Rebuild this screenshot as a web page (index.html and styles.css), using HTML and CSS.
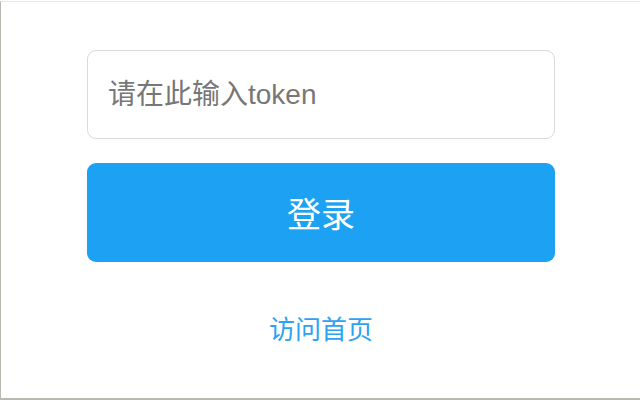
FILE: index.html
```html
<!DOCTYPE html>
<html lang="zh-CN">
<head>
<meta charset="utf-8">
<title>登录</title>
<link rel="stylesheet" href="styles.css">
</head>
<body>
<div class="frame">
  <form class="login">
    <input class="token" type="text" placeholder="请在此输入token">
    <button class="submit" type="button">登录</button>
    <a class="home" href="#">访问首页</a>
  </form>
</div>
</body>
</html>
```
FILE: styles.css
```css
html, body {
  margin: 0;
  padding: 0;
  background: #ffffff;
}
body {
  font-family: "Liberation Sans", "Noto Sans CJK SC", sans-serif;
}
.frame {
  box-sizing: border-box;
  width: 640px;
  margin-top: 1px;
  height: 399px;
  border-top: 1px solid #f3e4dc;
  border-left: 1px solid #b9b9b2;
  border-bottom: 2px solid #b9b9b2;
  display: flex;
  justify-content: center;
}
.login {
  width: 468px;
  margin-left: 1px;
  padding-top: 48px;
  display: flex;
  flex-direction: column;
  align-items: stretch;
}
.token {
  box-sizing: border-box;
  height: 89px;
  border: 1px solid #d9d9d9;
  border-radius: 9px;
  padding: 0 20px;
  font-family: "Liberation Sans", "Noto Sans CJK SC", sans-serif;
  font-size: 28px;
  color: #333;
  outline: none;
}
.token::placeholder {
  color: #777777;
}
.submit {
  margin-top: 24px;
  height: 99px;
  border: none;
  border-radius: 9px;
  background: #1da1f2;
  color: #ffffff;
  font-family: "Liberation Sans", "Noto Sans CJK SC", sans-serif;
  font-size: 34px;
  cursor: pointer;
}
.home {
  margin-top: 50px;
  align-self: center;
  font-size: 26px;
  line-height: 36px;
  color: #2ba3f2;
  text-decoration: none;
}
```
